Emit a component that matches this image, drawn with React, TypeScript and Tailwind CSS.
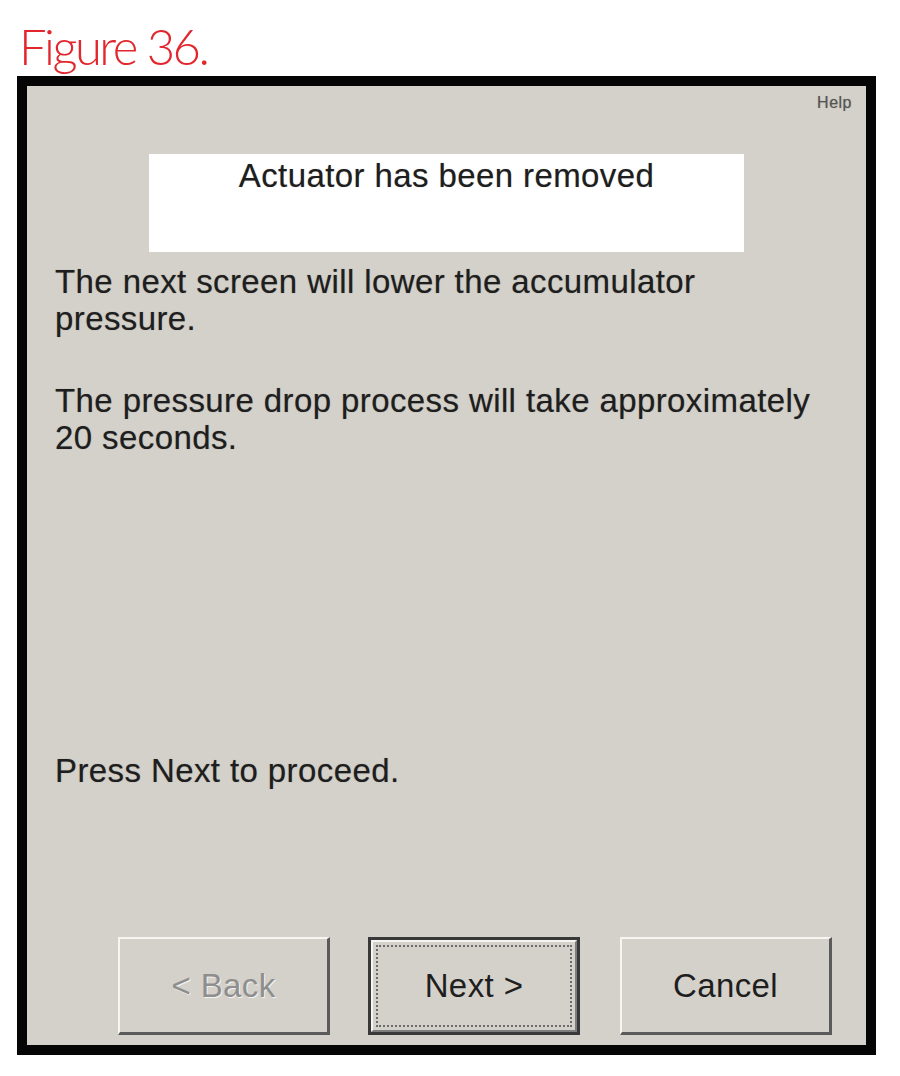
export default function App() {
  return (
    <div className="w-[900px] h-[1076px] bg-white [font-family:'Liberation_Sans',Arial,sans-serif]">
      <h1 className="pl-[19px] pt-[17px] h-[76px] leading-[59px] text-[49px] font-light tracking-[-2.5px] text-[#e1262d] [font-family:Lato,sans-serif]">
        Figure 36.
      </h1>

      <div className="ml-[17px] w-[859px] h-[979px] border-[10px] border-[#050505] bg-[#d4d0ca] flex flex-col text-[#1e1e1e] [text-shadow:0_0_1px_rgba(0,0,0,0.35)]">
        <div className="pt-[8px] pr-[14px] text-right text-[16px] leading-[18px] tracking-[0.5px] text-[#555]">
          Help
        </div>

        <div className="mt-[42px] mx-auto w-[595px] h-[98px] bg-white pt-[3px] text-center text-[33px] leading-[37px] tracking-[0.4px]">
          Actuator has been removed
        </div>

        <div className="pl-[28px] text-[33px] leading-[37px] tracking-[0.4px]">
          <p className="mt-[11px]">
            The next screen will lower the accumulator
            <br />
            pressure.
          </p>
          <p className="mt-[45px]">
            The pressure drop process will take approximately
            <br />
            20 seconds.
          </p>
          <p className="mt-[296px]">Press Next to proceed.</p>
        </div>

        <div className="mt-auto pb-[10px] pl-[91px] flex">
          <button
            type="button"
            disabled
            className="w-[212px] h-[98px] border-t-2 border-l-2 border-b-[3px] border-r-[3px] border-t-[#f6f5f1] border-l-[#f6f5f1] border-b-[#5b5b5b] border-r-[#5b5b5b] text-[33px] tracking-[0.4px] text-[#8e8e8e] [text-shadow:1px_1px_0_#f4f3ef]"
          >
            &lt; Back
          </button>

          <button
            type="button"
            className="ml-[38px] w-[212px] h-[98px] border-[3px] border-[#383838] flex"
          >
            <span className="flex-1 flex border-t-2 border-l-2 border-b-2 border-r-2 border-t-[#f6f5f1] border-l-[#f6f5f1] border-b-[#7d7d7d] border-r-[#7d7d7d]">
              <span className="flex-1 m-[3px] border-2 border-dotted border-[#6a6a6a] flex items-center justify-center text-[33px] tracking-[0.4px] text-[#1e1e1e]">
                Next &gt;
              </span>
            </span>
          </button>

          <button
            type="button"
            className="ml-[40px] w-[212px] h-[98px] border-t-2 border-l-2 border-b-[3px] border-r-[3px] border-t-[#f6f5f1] border-l-[#f6f5f1] border-b-[#5b5b5b] border-r-[#5b5b5b] text-[33px] tracking-[0.4px] text-[#1e1e1e]"
          >
            Cancel
          </button>
        </div>
      </div>
    </div>
  );
}
